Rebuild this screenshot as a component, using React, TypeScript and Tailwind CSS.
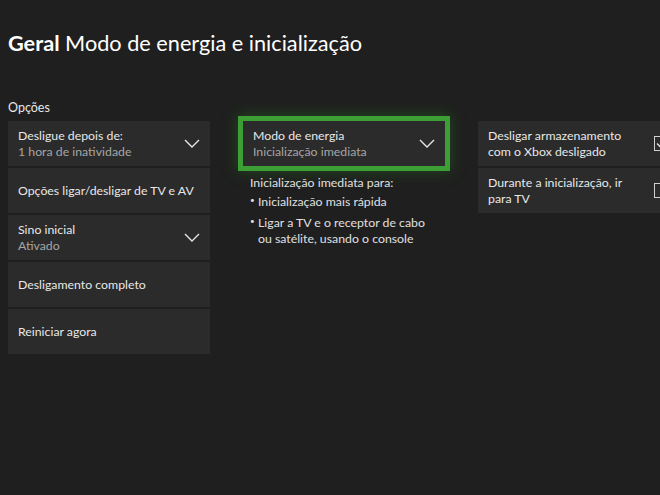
import React from "react";

const font = { fontFamily: 'Lato, "Noto Sans", sans-serif' };

const Chevron = () => (
  <svg width="16" height="9" viewBox="0 0 16 9" fill="none" className="shrink-0">
    <path d="M1 1l7 7 7-7" stroke="#e6e6e6" strokeWidth="1.4" />
  </svg>
);

const Checkbox = ({ checked }: { checked?: boolean }) => (
  <div className="w-[14px] h-[15px] border border-[#d0d0d0] shrink-0 flex items-center justify-center">
    {checked && (
      <svg width="10" height="9" viewBox="0 0 10 9" fill="none">
        <path d="M1 4.5l3 3L9 1" stroke="#e6e6e6" strokeWidth="1.3" />
      </svg>
    )}
  </div>
);

const Row = ({
  title,
  value,
  dropdown,
}: {
  title: string;
  value?: string;
  dropdown?: boolean;
}) => (
  <div className="h-[45px] bg-[#2b2b2b] pl-[10px] pr-[10px] flex items-center justify-between">
    <div className="flex flex-col leading-[16px] whitespace-nowrap">
      <span className="text-[12.3px] text-[#e8e8e8]">{title}</span>
      {value && <span className="text-[12.3px] text-[#a6a6a6]">{value}</span>}
    </div>
    {dropdown && <Chevron />}
  </div>
);

const ToggleRow = ({ lines, checked }: { lines: string[]; checked?: boolean }) => (
  <div className="h-[45px] bg-[#2b2b2b] pl-[10px] pr-[12px] flex items-center justify-between">
    <div className="flex flex-col leading-[16px] whitespace-nowrap">
      {lines.map((l) => (
        <span key={l} className="text-[12.3px] text-[#e8e8e8]">
          {l}
        </span>
      ))}
    </div>
    <Checkbox checked={checked} />
  </div>
);

const Bullet = () => <span className="w-[8px] shrink-0 text-[8px] leading-[12px]">•</span>;

export default function App() {
  return (
    <div
      className="w-[660px] h-[495px] bg-[#1f1f1f] overflow-hidden pl-2 pt-[28px] text-white"
      style={font}
    >
      <h1 className="text-[21.7px] leading-[30px] whitespace-nowrap">
        <span className="font-bold">Geral</span> Modo de energia e inicialização
      </h1>

      <div className="mt-[41px] text-[12.5px] leading-[18px] text-[#e8e8e8]">Opções</div>

      <div className="flex gap-[33px] mt-[4px]">
        {/* Opções */}
        <div className="w-[202px] shrink-0 flex flex-col gap-[2px]">
          <Row title="Desligue depois de:" value="1 hora de inatividade" dropdown />
          <Row title="Opções ligar/desligar de TV e AV" />
          <Row title="Sino inicial" value="Ativado" dropdown />
          <Row title="Desligamento completo" />
          <Row title="Reiniciar agora" />
        </div>

        {/* Modo de energia */}
        <div className="w-[202px] shrink-0 flex flex-col">
          <div className="outline-[5px] outline-solid outline-[#3c9e34] shadow-[0_0_14px_6px_rgba(40,140,30,0.35)]">
            <Row title="Modo de energia" value="Inicialização imediata" dropdown />
          </div>
          <div className="mt-[9px] pl-[7px] text-[12.3px] text-[#e0e0e0] leading-[16px]">
            <p>Inicialização imediata para:</p>
            <ul className="mt-[3px] flex flex-col gap-[5px]">
              <li className="flex">
                <Bullet />
                <span className="whitespace-nowrap">Inicialização mais rápida</span>
              </li>
              <li className="flex">
                <Bullet />
                <span className="whitespace-nowrap">
                  Ligar a TV e o receptor de cabo
                  <br />
                  ou satélite, usando o console
                </span>
              </li>
            </ul>
          </div>
        </div>

        {/* Toggles */}
        <div className="w-[202px] shrink-0 flex flex-col gap-[2px]">
          <ToggleRow lines={["Desligar armazenamento", "com o Xbox desligado"]} checked />
          <ToggleRow lines={["Durante a inicialização, ir", "para TV"]} />
        </div>
      </div>
    </div>
  );
}
